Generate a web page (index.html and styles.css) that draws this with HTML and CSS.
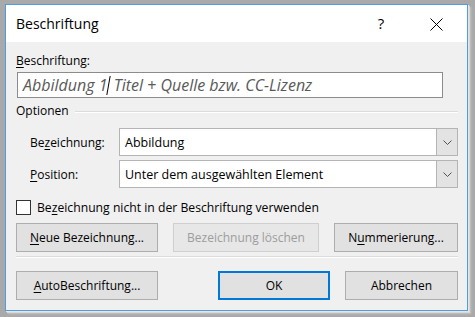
FILE: index.html
```html
<!DOCTYPE html>
<html lang="de">
<head>
<meta charset="utf-8">
<title>Beschriftung</title>
<link rel="stylesheet" href="styles.css">
</head>
<body>
<div class="dialog">
  <div class="titlebar">
    <div class="title">Beschriftung</div>
    <div class="help">?</div>
    <div class="close">
      <svg width="13" height="13" viewBox="0 0 13 13"><path d="M0.5 0.5 L12.5 12.5 M12.5 0.5 L0.5 12.5" stroke="#000" stroke-width="1" fill="none"/></svg>
    </div>
  </div>
  <div class="content">
    <div class="label"><u>B</u>eschriftung:</div>
    <div class="textbox"><span class="typed">Abbildung 1</span><span class="caret"></span><span class="typed"> Titel + Quelle bzw. CC-Lizenz</span></div>

    <div class="group"><span class="label">Optionen</span><span class="etch"></span></div>

    <div class="field">
      <div class="flabel">Be<u>z</u>eichnung:</div>
      <div class="combo"><span class="cval">Abbildung</span><span class="drop"><svg width="9" height="5" viewBox="0 0 9 5"><path d="M0.5 0.5 L4.5 4.5 L8.5 0.5" stroke="#505050" stroke-width="1" fill="none"/></svg></span></div>
    </div>
    <div class="field second">
      <div class="flabel"><u>P</u>osition:</div>
      <div class="combo"><span class="cval">Unter dem ausgewählten Element</span><span class="drop"><svg width="9" height="5" viewBox="0 0 9 5"><path d="M0.5 0.5 L4.5 4.5 L8.5 0.5" stroke="#505050" stroke-width="1" fill="none"/></svg></span></div>
    </div>

    <div class="check"><span class="box"></span><span class="clabel">Be<u>z</u>eichnung nicht in der Beschriftung verwenden</span></div>

    <div class="row1">
      <div class="btn w1"><u>N</u>eue Bezeichnung...</div>
      <div class="btn w2 disabled">Bezeichnung löschen</div>
      <div class="btn w3">N<u>u</u>mmerierung...</div>
    </div>
    <div class="sep"></div>
    <div class="row2">
      <div class="btn w1"><u>A</u>utoBeschriftung...</div>
      <div class="btn ok">OK</div>
      <div class="btn cancel">Abbrechen</div>
    </div>
  </div>
</div>
</body>
</html>
```
FILE: styles.css
```css
html, body {
  margin: 0;
  padding: 0;
}
body {
  width: 475px;
  height: 317px;
  background: #a9a9a9;
  overflow: hidden;
  font-family: "Open Sans", "Noto Sans", sans-serif;
  font-size: 12px;
  color: #000;
}
u {
  text-decoration: underline;
  text-underline-offset: 2px;
}
.dialog {
  margin: 4px 0 0 5px;
  width: 463px;
  height: 307px;
  box-sizing: border-box;
  border: 1px solid #4c9ee3;
  background: #f0f0f0;
  box-shadow: 1px 1px 0 #e6e6e6, 2px 2px 0 #d8d8d8, 3px 3px 2px #c4c4c4;
  display: flex;
  flex-direction: column;
}
.titlebar {
  height: 37px;
  background: #fff;
  display: flex;
  align-items: center;
  flex: none;
}
.title {
  padding-left: 10px;
  font-size: 14px;
  flex: 1;
  margin-top: -1px;
}
.help {
  font-size: 15px;
  width: 20px;
  text-align: center;
  margin-right: 39px;
  margin-top: -1px;
}
.close {
  width: 13px;
  height: 13px;
  margin-right: 24px;
  margin-top: 1px;
}
.close svg { display: block; }
.content {
  padding: 11px 9px 0 10px;
  display: flex;
  flex-direction: column;
}
.label {
  height: 16px;
  line-height: 16px;
}
.textbox {
  margin-top: 3px;
  margin-left: 1px;
  width: 426px;
  height: 26px;
  box-sizing: border-box;
  border: 1px solid #8c8c8c;
  background: #fff;
  display: flex;
  align-items: center;
  padding-left: 5px;
  font-style: italic;
  font-size: 16px;
  color: #595959;
  white-space: pre;
}
.caret {
  display: inline-block;
  width: 1px;
  height: 19px;
  background: #000;
  transform: skewX(-10deg);
  margin: 1px 0 0 1px;
}
.group {
  margin-top: 5px;
  height: 16px;
  display: flex;
  align-items: center;
}
.etch {
  flex: 1;
  margin-left: 6px;
  height: 1px;
  background: #dcdcdc;
  border-bottom: 1px solid #fff;
  margin-top: 2px;
}
.field {
  margin-top: 9px;
  height: 28px;
  display: flex;
  align-items: center;
}
.field.second { margin-top: 4px; }
.flabel {
  width: 89px;
  padding-left: 14px;
  flex: none;
}
.combo {
  flex: 1;
  height: 28px;
  box-sizing: border-box;
  border: 1px solid #b4b4b4;
  background: #fff;
  display: flex;
  align-items: stretch;
}
.cval {
  flex: 1;
  padding-left: 5px;
  display: flex;
  align-items: center;
  font-size: 12.5px;
}
.drop {
  width: 20px;
  background: #e3e3e3;
  border-left: 1px solid #b4b4b4;
  display: flex;
  align-items: center;
  justify-content: center;
}
.drop svg { display: block; }
.check {
  margin-top: 11px;
  height: 16px;
  display: flex;
  align-items: center;
}
.box {
  width: 15px;
  height: 15px;
  box-sizing: border-box;
  border: 1px solid #333;
  background: #fff;
  flex: none;
}
.clabel {
  margin-left: 6px;
  font-size: 12.2px;
}
.row1, .row2 {
  display: flex;
  gap: 15px;
}
.row1 { margin-top: 8px; }
.row2 { margin-top: 13px; }
.btn {
  height: 29px;
  box-sizing: border-box;
  border: 1px solid #adadad;
  background: #e1e1e1;
  display: flex;
  align-items: center;
  justify-content: center;
  flex: none;
}
.w1 { width: 142px; }
.w2 { width: 146px; }
.w3 { width: 124px; }
.disabled {
  background: #e7e7e7;
  border-color: #cfcfcf;
  color: #9d9d9d;
}
.sep {
  margin-top: 4px;
  height: 1px;
  background: #dcdcdc;
  border-bottom: 1px solid #fff;
}
.ok {
  margin-left: auto;
  width: 112px;
  border: 2px solid #0078d7;
}
.cancel {
  width: 113px;
}
```
